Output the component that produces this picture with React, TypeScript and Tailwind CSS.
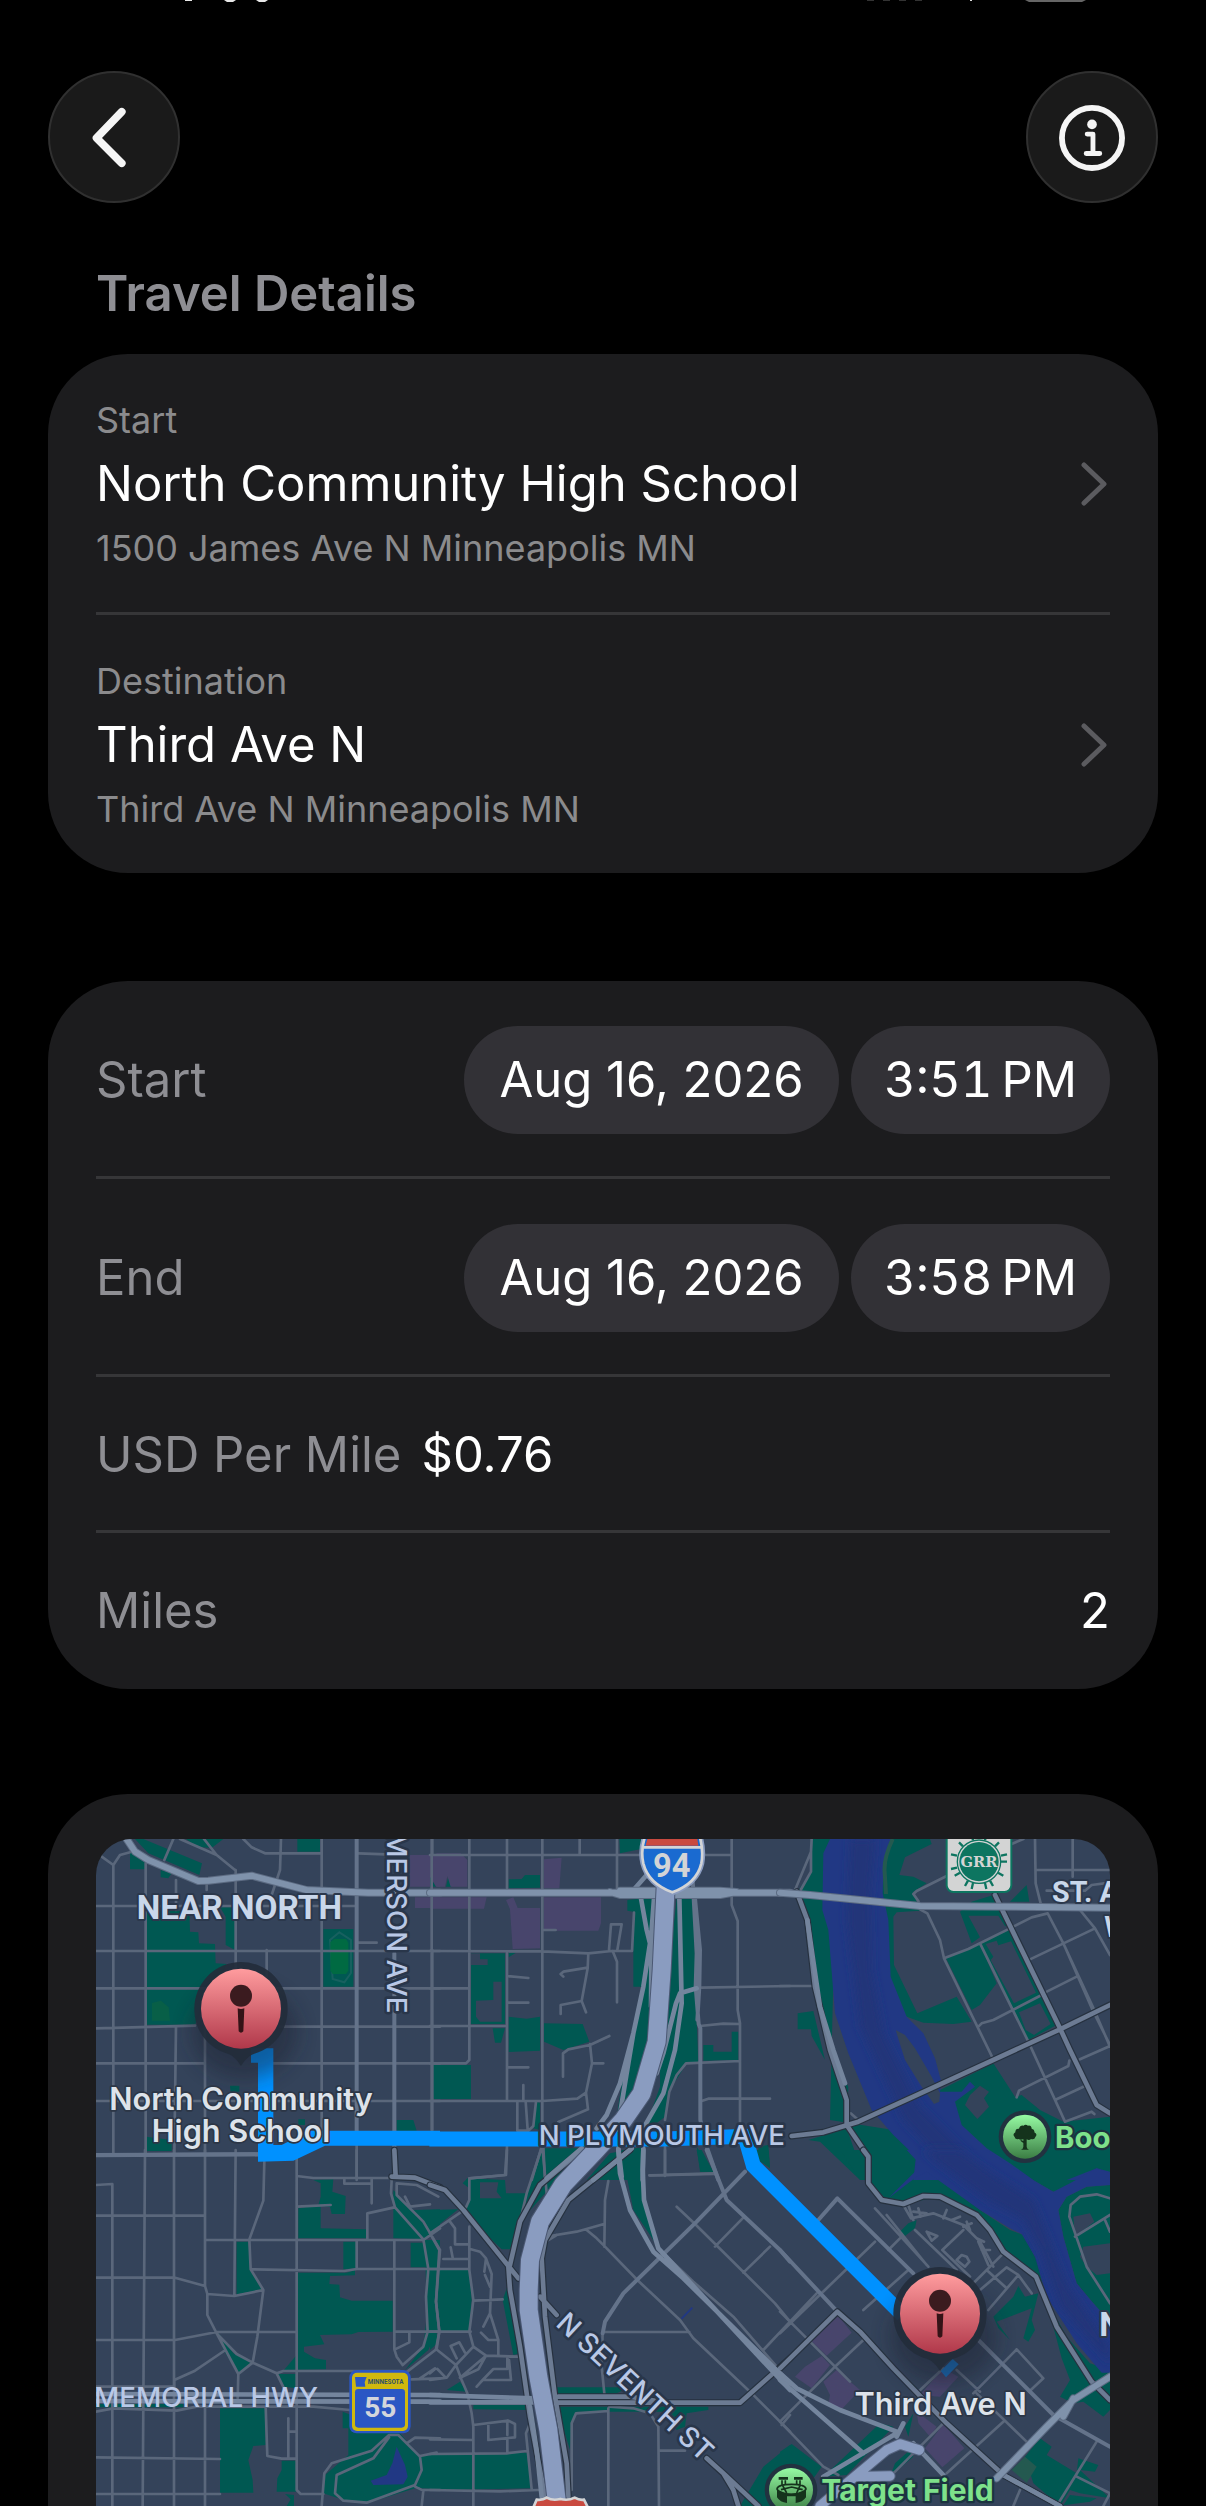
import type { ReactNode } from 'react';

type Tile = {
  x: number;
  y: number;
  parks: string;
  blocks?: string;
  retail?: string;
  water?: string;
  deepWater?: string;
  minor: string;
  mid: string;
  cased: string;
  ramps: string;
  main: string;
  highway: string;
};

// each tile keeps its own coordinates, x/y place it on the map
const tiles: Tile[] = [
  {
    x: -48,
    y: -57,
    parks:
      'M165 57 190 57 366 130 358 165 205 100ZM150 95 197 122 197 148 150 148ZM242 150 275 160 265 175 242 172ZM318 57 430 57 395 84 350 80ZM652 57 720 57 720 95 652 95ZM198 272 328 272 330 335 355 337 357 370 405 372 407 430 440 432 345 614 198 614ZM420 262 465 262 465 390 437 375 437 290ZM730 327 820 327 820 500 730 500ZM1060 735 1080 735 1080 835 1060 835ZM950 900 1000 900 1010 932 950 932ZM198 950 275 960 275 993 198 993ZM450 797 478 797 478 815 452 815ZM655 898 675 898 675 915 655 915Z',
    retail: 'M990 105 1080 105 1080 200 990 200ZM1005 232 1080 232 1080 264 1005 264Z',
    minor:
      'M100 135V1000M197 130V1000M288 180V270M288 620 283 1000M375 615V1000M380 183V210M467 150V460M560 390V470M725 57V930M830 940V1080M1057 57V105M1057 390V930M48 258H830M48 393H1080M835 368H890M48 505H1080M48 625 345 617M600 620H1080M48 730H375M580 730H1080M48 843H1080M555 100H720M835 100 920 103M300 57 410 105 465 150M372 57 410 105M490 57 515 82 555 100M280 57 253 120M65 110 100 135 120 105 150 97M603 57 600 150 575 225',
    mid: 'M830 57V940M943 400V1000M48 1006 545 1003',
    cased: '',
    ramps: '',
    main: 'M140 57 165 95 205 120 355 183 385 182 515 167 680 210 865 218 1080 218',
    highway: '',
  },
  {
    x: 1002,
    y: -57,
    parks:
      'M568 57 635 57 630 88 570 100ZM236 178 275 177 285 165 330 165 330 203 236 205ZM0 170 15 172 20 200 0 200ZM48 200 55 170 65 200ZM123 400 225 400 225 612 123 612ZM236 398 258 398 236 412ZM236 590 290 596 330 590 330 692 236 696ZM342 610 458 612 478 665 400 690 342 665ZM188 625 225 625 213 668 195 668ZM10 735 123 735 123 837 10 837ZM592 240 680 230 660 600 660 780 560 890 580 760 640 500 610 500 610 275 592 272ZM740 235 790 235 800 600 805 725 770 730 745 770 715 815 705 890 640 940 690 800 690 700ZM820 675 850 675 850 695 905 695 905 635 925 635 925 720 820 722ZM318 845 330 848 330 930 310 925ZM335 985 460 985 370 1060 305 1080ZM540 1000 640 980 640 1080 470 1080ZM800 980 850 1055 810 1055ZM985 980 1015 975 1020 1040 985 1020Z',
    blocks: 'M190 485 215 485 215 605 150 605 138 590 138 542 190 540ZM123 435 173 435 173 418 150 418 150 400 123 400Z',
    retail:
      'M0 120 20 100 92 100 112 120 112 200 62 200 52 168 45 200 18 200 0 170ZM0 232 170 232 162 266 0 266ZM342 118 395 113 388 205 342 205ZM342 232 513 232 513 310 505 332 342 332ZM228 240 250 232 263 264 330 264 330 385 248 387 240 268Z',
    minor:
      'M5 57V930M118 57V720L108 730H0M231 57V205M231 398V840M337 57V930M449 57V103M561 57V210M905 57V255L923 303V570L930 610V930M0 105H905M0 393 337 394 475 400 545 393H606L612 278M0 505H118M0 618H228M0 843H337L442 836 468 818 486 730 480 672M538 648 480 675 415 688 399 700V770M486 730H520M468 818 474 868 385 906M337 330H377M231 468 295 474M231 548H295M231 742H295M537 390 543 313H575L562 390M548 393 561 425V547M475 400 473 445 455 543 468 577M473 443 400 455 392 462 400 470M455 543 392 555V582M280 795V843M287 845 293 930M318 845 310 918 295 932 262 932V845M810 618 880 611 930 612M815 503 1080 498M705 920V1068M705 900 718 815 740 765 768 730 930 723M815 843 835 836H1020M231 980 225 1065 118 1075M335 980 305 1080M340 980 345 1080M658 1066 850 1060',
    mid: 'M788 180 800 400 797 500 806 612 811 625V900L830 980 865 1080M795 235 810 390 808 500 802 600',
    cased: '',
    ramps:
      'M633 235 650 330 660 370 640 500 610 640 570 790 530 885 500 925M672 235 665 330 663 560M610 640 590 760 572 870M748 230 755 550 735 690 700 820 640 925M800 505 750 520 738 550 700 700 680 760M650 165 615 205M455 985 350 1075M605 985 490 1080M565 985 575 1070M640 985 638 1080',
    main: 'M0 218H1080M540 216 570 225 870 225 920 216 870 212H570',
    highway: '',
  },
  {
    x: 2052,
    y: -57,
    parks:
      'M97 57 170 57 150 900 340 930 410 1000 410 1080 270 1080 265 1010 200 920 205 800 150 700 110 560 90 300 50 220 95 150ZM300 57 450 57 455 72 375 112 358 165 400 170 440 190 400 215 410 245 420 272 350 277 340 290 342 435 412 580 530 530 575 605 520 612 430 608 380 590 300 500ZM498 415 600 372 650 490 600 555 575 570ZM540 275 575 370 600 352 565 287 655 287 675 318 690 320 650 255 640 225 575 245ZM600 370 695 325 830 615 745 660ZM690 245 740 195 748 245ZM53 580 100 573 135 720 95 648 93 628 53 628ZM640 730 705 830 725 825 780 870 850 905 990 890 990 1080 740 1080 500 975 440 830ZM85 960 120 965 240 1080 290 1080 230 1010 200 925Z',
    blocks:
      'M617 372 650 362 655 376 693 364 768 518 702 550 632 420 640 410ZM717 577 780 550 812 612 762 645 737 630ZM600 797 627 815 612 835 627 860 592 897 555 855 570 825Z',
    water:
      'M150 57 335 57 310 150 308 220 325 300 332 470 380 590 430 640 465 715 485 790 480 815 545 815 570 785 585 800 545 830 525 845 545 915 620 985 690 1030 760 1080 400 1080 408 1010 340 945 275 870 205 700 165 580 145 330 127 270 130 100ZM860 1080 950 1045 990 1055 990 1080Z',
    deepWater: 'M210 57 285 57 270 250 275 450 310 640 420 860 560 1000 680 1080 540 1080 370 900 240 620 200 300Z',
    minor:
      'M95 57 93 95 45 210M93 95V155L62 210M0 498H100M500 168 410 213 400 222 415 243 420 268 442 280 480 360 492 415 640 718M492 415 565 387 690 325 755 292 803 280M600 370 745 665 855 905M803 280 850 370 945 575 990 680M850 370 940 575 990 675M750 418 945 325M790 520 890 470M900 270 945 325 990 405M595 620 605 610 640 600 785 525M710 832 717 812 865 738 868 722M825 840 915 798M855 905 935 875 943 882M900 718 990 678M765 57 767 190 782 250M878 57V170M767 150H990M800 212H915L935 195 990 188M695 72 730 57M212 880 235 900',
    mid: '',
    cased:
      'M50 215 82 300 105 500 150 690 200 840V915L265 1010V1080M35 948 130 937 235 905 400 830 840 628 990 555M645 225 840 625 870 690 950 855 990 880',
    ramps: 'M82 300 120 560 160 690 195 790',
    main: 'M0 218 90 225 420 258 990 263',
    highway: '',
  },
  {
    x: -48,
    y: 933,
    parks:
      'M700 90 760 88 757 125 797 138 795 192 755 192 750 170 722 168 722 235 858 238 858 265 655 265 655 175 715 165 722 140 722 100ZM470 275 505 275 512 355 548 418 470 433ZM415 548 460 610 515 638 475 672 430 600ZM652 368 800 368 825 360 825 376 750 378 748 402 778 404 780 442 815 452 938 452 938 545 835 546 815 553 720 555 733 583 672 590 672 605 705 625 738 630 738 658 612 660 650 615ZM595 672 650 672 650 715 612 710ZM790 275 830 275 830 355 790 358ZM992 278 1035 278 1040 352 992 352ZM940 120 1000 180 1080 178 1080 240 1030 268 940 265ZM1035 270 1080 270 1070 545 1045 600 975 660 1030 590 1040 500ZM48 762H310V772H48ZM420 775 555 775 557 885 520 888 505 930 518 990 520 1028 420 1028ZM605 932 648 932 648 1025 590 1025 592 985 605 960ZM615 1032 642 1035 642 1068 620 1068 632 1048ZM788 785 960 850 1020 920 1020 1010 860 1060 790 1050 730 1030 735 975 805 915 805 835 788 835ZM1020 920 1080 910 1080 1018 1020 1015Z',
    water: 'M950 890 975 945 983 980 970 1003 880 1005 872 992 920 975 937 940Z',
    minor:
      'M48 105 97 102V1068M195 0 188 1068M282 0V1068M375 0V408L382 432V495L410 550 475 672 473 745M375 765V1068M467 0 463 438M553 35 550 152 508 268 512 358 550 420 532 560 518 638M650 0V1020L662 1032H730M830 0V83M830 272V355M943 272V598L950 620 968 645M48 197H375M48 383H285L375 408M48 570H285L410 546H650M377 270H1030M515 358 793 363 830 357H1080M382 432 463 438 550 420M410 550 470 612 518 638 590 670 612 715M518 638 475 672M432 603 345 662 283 690V715M590 670 610 663H960M650 78 700 84H940M650 170 752 165M793 84V101H875M875 84V160M862 268V190L943 172M943 545H1080M988 545V577L945 598M48 710H280M48 785 100 775 290 782 350 770H700L810 780M48 922 420 927M48 1032H420M557 770 562 918 605 926H648M625 805V925M625 845H648M927 862 880 925 770 975 765 1030 790 1052 860 1058 1005 1005 1025 960 1020 920 980 880 955 855H927L875 902 755 940 733 970 725 1068M980 880 1005 863 1080 865M1020 918 1070 908M1005 1010 1030 1022 1025 1068M1030 1020H1080M935 90 933 130 945 172 1030 268 1045 357 1038 440 1043 545 1030 590 968 645M950 100V135L1030 215 1080 300M1030 270 1080 235M950 100 1010 105 1075 140M990 170 1050 163M975 140 990 170M995 688 1080 685M1020 685 1065 655M1080 300 1068 455 1078 545 1070 597 975 670',
    mid: 'M48 15 535 13',
    cased: 'M943 0 947 80M935 80 1005 83 1080 112',
    ramps: 'M48 732 1080 735M48 753 1080 755',
    main: '',
    highway: '',
  },
  {
    x: 1002,
    y: 933,
    parks:
      'M0 180 85 178 0 245ZM0 360 120 360 125 450 118 545 20 545 22 580 0 600ZM98 100 112 85 225 90 228 130 290 130 335 0 460 0 270 215 240 298 215 298 90 180 118 160 118 115ZM235 400 270 610 250 615 218 450ZM380 712 600 712 560 730 385 735ZM380 770 835 770 835 780 770 790 765 830 740 840 700 785 440 785 425 815 420 900ZM0 912 290 908 305 1015 0 1020ZM50 720 90 695 110 725ZM130 765 300 765 298 780 130 778ZM575 0 640 0 640 150 690 300 610 180ZM800 0 815 0 850 65 812 65ZM970 0 1015 0 1020 55 985 30ZM1080 885 1080 1068 930 1068 1000 950Z',
    blocks: 'M150 97 205 97 200 125 215 145 150 145Z',
    minor:
      'M231 0 228 75 118 85V150L105 178M333 0 290 130 270 215M338 0 350 130M660 76 853 72M705 0V75M0 357H118M0 545H122M60 215 75 235V283H118M0 250 105 178M0 250 28 300 18 455 28 545 18 597 78 645 95 690 112 730 125 790 130 830V1068M118 230V360L130 450 118 545 130 590 168 617 270 620M120 297 150 305 168 325 185 372 180 490 160 530M165 375 180 410M168 325 163 365M130 452 218 448M180 490 205 570V615M205 570H175L153 548M40 327H118M68 323 62 292M130 590 78 645M62 588 88 577 105 608M62 588 80 625M168 617 145 658 90 683M168 617 90 683M140 710 158 690H243L237 630M232 625V657H190L158 690M0 690 50 683 78 645M22 657 47 683M0 670 15 657M535 93 525 150 523 290M522 222 440 245 360 258M470 240 500 265 525 290 622 390 750 510 790 565 960 725 1080 845M740 170 795 222 1035 460 1080 515 1000 600M855 290 940 203M940 368 1020 290M525 546H778M518 546 515 650 525 750 540 770 610 775 660 790 685 830 687 1068M535 775V1068M425 1020V820L438 790 535 783M687 902H765M130 825 235 812 255 822V862L175 870V825M232 812V855M232 870V905M0 868 130 870M0 912 230 910 290 903M300 820 288 850 305 1018M0 1020 210 1024 325 1020M1055 825 1080 795M700 310 790 395 910 500 1040 650M355 270 380 255',
    water: 'M752 505 785 471 789 475 757 508Z',
    mid: 'M830 0 890 150 1050 300 1080 335M945 65 800 215 580 430 525 515 518 550M830 925 865 955',
    cased:
      'M0 105 45 120 100 180 265 385M240 345 270 215 330 105 455 0M235 350 240 420 270 590 300 800 345 1040M600 0 415 150 345 270 335 325 345 500 375 740 410 940 415 1040M330 440 380 495M385 740H600L690 755M385 758H930L1080 625M830 925 880 970 985 1068M880 970 910 1020 925 1068',
    ramps:
      'M565 0 570 70 600 180 670 305 760 385 1080 700M640 0 638 60 642 150 685 295 1080 720M0 735 310 745M0 757H310M300 770 320 900 335 1040',
    main: '',
    highway: '',
  },
  {
    x: 2052,
    y: 933,
    parks:
      'M180 0 400 0 450 60 600 180 690 240 730 255 770 330 800 450 860 560 930 640 990 660 990 780 970 800 910 755 880 760 840 740 870 690 845 625 820 530 785 420 765 380 680 310 620 220 480 140 380 160 320 150 265 90 240 88ZM600 0H990V80L820 125ZM990 105 920 110 860 140 835 180 850 260 890 400 940 460 990 515ZM640 500 700 440 715 408 735 440 775 430 755 510 765 540 745 575 730 565 755 475 650 515 690 570 655 535ZM385 220 410 210 405 235 370 262 355 250ZM0 905 35 882 125 950 90 1000 0 1000ZM130 980 300 820 340 830 200 975ZM375 830 400 790 385 860ZM345 940 390 900 400 920 330 980ZM780 865 815 890 800 915 890 970 895 925 955 945 945 965 900 960 990 1045 900 1030 870 1020 840 1068 760 1000 735 920ZM870 1035 950 1045 930 1055 850 1066Z',
    blocks: 'M880 200 930 190 943 215 885 260ZM910 290 990 280 990 370 950 375 920 350 900 320Z',
    retail:
      'M175 497 215 548 140 617 93 572ZM45 680 75 650 125 618 150 645 95 715ZM130 695 170 660 240 720 185 778 145 765 150 735ZM490 655 535 680 480 740 420 735ZM410 785 470 830 450 860 415 820ZM490 822 553 895 487 952 435 895Z',
    water:
      'M380 0 620 0 700 55 820 125 870 100 950 55 990 70 990 105 920 110 860 140 835 180 850 260 890 400 940 460 990 515 990 668 965 668 890 580 800 440 765 320 725 252 690 235 600 180 440 65 410 80 325 145 370 100 405 65 408 30Z',
    deepWater: 'M540 0 620 60 760 150 800 250 860 400 990 590 990 640 840 470 780 300 730 210 620 150 460 30 430 0Z',
    minor:
      'M285 275 0 550M385 360 250 480M285 175 445 350M320 195 440 345M365 260 325 300M405 240 530 360M370 165 393 205 460 190 550 225 600 275 640 350M385 165 400 210M550 240 487 300M487 300 570 380M0 485 210 695M110 430 30 515M165 650 250 570M165 650 0 815 130 950 175 975M670 310 575 405M620 360 680 415M600 420 680 352 715 375 625 480M715 375 755 430M710 598 580 730M710 598 790 685 750 722M530 660 600 725M590 730 745 880M410 730 490 655M670 815 500 970M720 1020 700 1068M950 875 830 1068M890 980 990 1030 970 1068M990 145 950 133 900 140 872 165 868 200 920 350 990 460M885 260 990 195M975 210 990 245M440 245 472 258 455 272ZM530 330 545 315 560 320 568 335 555 350ZM400 185 440 190M415 175 422 200M490 205 500 180M515 210 540 200M550 230 575 220M560 215 570 240M590 265 612 275M605 300 630 300M595 275 625 345M495 815 340 970',
    mid: 'M115 210 172 145 400 370M0 300 172 485M595 570 665 640 820 795 990 890',
    cased:
      'M250 0 265 20V100L305 150 370 162 430 138 480 140 590 195 630 240 670 305 768 380 830 530 935 695 990 750M0 655 172 485 240 545 340 655 500 820 670 975 840 1068',
    ramps:
      'M0 670 50 715 180 780 350 845M0 690 250 910M490 975 400 880M350 860 370 820M130 980 350 850M670 975 840 1068',
    main: 'M990 680 880 750 800 830 650 985M880 745 850 800',
    highway: 'M418 900 360 882 320 900 200 1000 120 1068M330 978 230 980',
  },
];

const freeway = 'M1709 143 1697 393 1682 608 1637 763 1582 843 1500 933 1402 1036 1332 1148 1302 1263 1298 1353 1298 1413 1327 1613 1357 1773 1384 2001';

function Layer({ children }: { children: (tile: Tile) => ReactNode }) {
  return (
    <>
      {tiles.map((tile) => (
        <g key={`${tile.x}:${tile.y}`} transform={`translate(${tile.x} ${tile.y})`}>
          {children(tile)}
        </g>
      ))}
    </>
  );
}

function Pin({ x, y }: { x: number; y: number }) {
  return (
    <g transform={`translate(${x} ${y})`}>
      <ellipse cx="10" cy="70" rx="160" ry="140" fill="#1a2230" opacity="0.45" filter="url(#soft)" />
      <path d="M-140 0A140 140 0 1 1 140 0C140 70 95 120 40 135 20 142 8 160 0 172-8 160-20 142-40 135-95 120-140 70-140 0Z" fill="#232d3b" opacity="0.92" />
      <circle r="120" fill="url(#pin)" />
      <circle cy="-39" r="33" fill="#3b1b1f" />
      <path d="M-10-1Q0 3 10-1L7 68Q0 76-7 68Z" fill="#341317" />
    </g>
  );
}

function RouteMap() {
  return (
    <svg
      viewBox="0 0 3042 2001"
      className="block h-auto w-full rounded-t-[36px] bg-[#34435a] font-['Inter',sans-serif]"
      role="img"
      aria-label="Map of the route"
      fill="none"
    >
      <defs>
        <linearGradient id="pin" x1="0" y1="0" x2="0" y2="1">
          <stop offset="0" stopColor="#ff9c9e" />
          <stop offset="1" stopColor="#b0384a" />
        </linearGradient>
        <linearGradient id="poi" x1="0" y1="0" x2="0" y2="1">
          <stop offset="0" stopColor="#96fba3" />
          <stop offset="1" stopColor="#3b7d44" />
        </linearGradient>
        <filter id="soft" x="-30%" y="-30%" width="160%" height="160%">
          <feGaussianBlur stdDeviation="28" />
        </filter>
        <filter id="depth">
          <feGaussianBlur stdDeviation="12" />
        </filter>
      </defs>

      <Layer>
        {(t) => (
          <>
            <path d={t.parks} fill="#005852" />
            <path d={t.blocks} fill="#34435a" />
            <path d={t.retail} fill="#48456c" />
          </>
        )}
      </Layer>
      <Layer>
        {(t) => (
          <>
            <path d={t.water} fill="#213884" />
            <path d={t.deepWater} fill="#203579" filter="url(#depth)" />
          </>
        )}
      </Layer>
      <path d="M2399 573 2427 588 2457 628 2507 713 2532 763 2530 788 2514 795 2477 743 2427 663Z" fill="#34435a" />
      <path d="M702 303 730 280 765 303V402L745 430 710 420Z" stroke="#17605f" strokeWidth="6" />
      <path d="M703 310 715 300H750L757 312V395L750 405H710L703 395Z" fill="#006a42" />
      <path d="M168 492 195 485 218 505 222 545H168Z" fill="#085f47" />
      <path d="M2747 1893 2787 1853 2822 1883 2792 1931Z" fill="#245950" />
      <path d="M2390 0Q2362 60 2366 100L2370 165" stroke="#24594f" strokeWidth="12" />

      <g strokeLinecap="round" strokeLinejoin="round">
        <Layer>{(t) => <path d={t.minor} stroke="#5a677b" strokeWidth="8" />}</Layer>
        <Layer>{(t) => <path d={t.mid} stroke="#64738a" strokeWidth="12" />}</Layer>
        <Layer>
          {(t) => (
            <>
              <path d={t.cased} stroke="#26313f" strokeWidth="21" />
              <path d={t.cased} stroke="#6c7b93" strokeWidth="14" />
            </>
          )}
        </Layer>
        <Layer>{(t) => <path d={t.ramps} stroke="#74859d" strokeWidth="14" />}</Layer>
        <Layer>
          {(t) => (
            <>
              <path d={t.main} stroke="#5c6b82" strokeWidth="24" />
              <path d={t.main} stroke="#7f92ab" strokeWidth="18" />
            </>
          )}
        </Layer>
        <path d={freeway} stroke="#4b5873" strokeWidth="60" />
        <path d={freeway} stroke="#8a9cc0" strokeWidth="54" />
        <Layer>
          {(t) => (
            <>
              <path d={t.highway} stroke="#56647f" strokeWidth="34" />
              <path d={t.highway} stroke="#8a9cc0" strokeWidth="28" />
            </>
          )}
        </Layer>
      </g>

      {/* route */}
      <path d="M465 628H532V918H557L642 875H1032V920H687L592 965 486 968V671H465Z" fill="#0091ff" />
      <path d="M1000 900 1700 900 1947 892 1972 980 2420 1428" stroke="#0091ff" strokeWidth="45" />
      <path d="M2534 1596 2570 1560 2588 1576 2550 1615Z" fill="#1673c4" />

      <Pin x={435} y={509} />
      <Pin x={2532} y={1424} />

      {/* road and area names */}
      <g strokeLinejoin="round" paintOrder="stroke" stroke="#29364a" strokeWidth="16" fill="#b9c8e6" fontSize="83" fontWeight="500">
        <text transform="translate(874 523) rotate(90)" textAnchor="end">EMERSON AVE</text>
        <text x="1328" y="918">N PLYMOUTH AVE</text>
        <text x="-6" y="1705" stroke="none">MEMORIAL HWY</text>
        <text transform="translate(1376 1458) rotate(43)">N SEVENTH ST</text>
      </g>
      <g className="font-['Roboto',sans-serif]" strokeLinejoin="round" paintOrder="stroke" stroke="#2b384c" strokeWidth="12" fill="#c9d7ea" fontWeight="700">
        <text x="122" y="239" fontSize="100">NEAR NORTH</text>
        <text x="2868" y="190" fontSize="86">ST. A</text>
        <text x="3025" y="294" fontSize="86">W</text>
        <text x="3010" y="1490" fontSize="98">N</text>
      </g>
      <g strokeLinejoin="round" paintOrder="stroke" stroke="#2c3646" strokeWidth="10" fill="#dde3ea" fontSize="92" fontWeight="600" textAnchor="middle">
        <text x="435" y="813">North Community</text>
        <text x="435" y="910">High School</text>
        <text x="2534" y="1728">Third Ave N</text>
      </g>

      {/* interstate 94 */}
      <path d="M1652-20Q1632 28 1642 73 1657 133 1729 160 1802 133 1816 73 1824 28 1807-20Z" fill="#1a6ad0" stroke="#8a9cc0" strokeWidth="18" />
      <path d="M1652-20Q1632 28 1642 73 1657 133 1729 160 1802 133 1816 73 1824 28 1807-20Z" fill="#1a6ad0" stroke="#d3d4d6" strokeWidth="8" />
      <path d="M1654 0H1804L1807 20H1649Z" fill="#c94a40" />
      <path d="M1643 25H1815" stroke="#d3d4d6" strokeWidth="8" />
      <text x="1727" y="113" textAnchor="middle" fontSize="98" fontWeight="700" fill="#d3d4d6" className="font-['Roboto',sans-serif]">94</text>
      <path d="M1310 2010 1322 1982Q1340 1984 1352 1976 1370 1986 1393 1980 1416 1986 1436 1976 1450 1984 1464 1982L1478 2010Z" fill="#c94a40" stroke="#d3d4d6" strokeWidth="8" />

      {/* Great River Road */}
      <rect x="2552" y="-30" width="194" height="189" rx="20" fill="#d3d4d4" stroke="#0d7560" strokeWidth="6" />
      <g transform="translate(2649 68)">
        <path
          d="M66 0 84 0M57 33 73 42M33 57 42 73M-18 64-22 82M18 64 22 82M-33 57-42 73M-57 33-73 42M-66 18-84 22M-66-18-84-22M-48-46-60-58M-18-64-20-72M18-64 20-72M48-46 60-58M66-18 84-22"
          stroke="#0d7560"
          strokeWidth="7"
        />
        <circle r="65" fill="#d3d4d4" stroke="#0d7560" strokeWidth="4" />
        <circle r="59" fill="#0d7560" />
        <text y="17" textAnchor="middle" fontSize="44" fontWeight="700" fill="#d3d4d4" className="font-['DejaVu_Serif',serif]">GRR</text>
      </g>

      {/* Minnesota 55 */}
      <rect x="760" y="1593" width="184" height="190" rx="22" fill="#2b57c4" />
      <rect x="768" y="1601" width="168" height="175" rx="15" fill="#d0b80e" />
      <rect x="777" y="1650" width="150" height="116" rx="10" fill="#2b57c4" />
      <path d="M777 1614H812L806 1630 808 1643H780Z" fill="#2b57c4" />
      <text x="815" y="1636" fontSize="19" fontWeight="700" fill="#2f5068" className="font-['Roboto',sans-serif]">MINNESOTA</text>
      <text x="853" y="1734" textAnchor="middle" fontSize="84" fontWeight="700" fill="#d3d6dc" className="font-['Roboto',sans-serif]">55</text>

      {/* park */}
      <circle cx="2787" cy="893" r="79" fill="#223240" />
      <circle cx="2787" cy="893" r="66" fill="url(#poi)" />
      <path
        d="M2775 932Q2781 930 2782 924V912L2773 905 2775 903 2782 906V900Q2774 905 2768 900 2756 902 2756 894 2748 886 2758 880 2758 868 2769 869 2772 858 2783 860 2788 854 2796 860 2806 858 2807 869 2817 871 2815 880 2826 886 2818 894 2816 903 2805 900 2800 905 2792 901V924Q2793 930 2799 932Z"
        fill="#15331c"
      />
      <text x="2877" y="928" fontSize="88" fontWeight="700" fill="#7ee18b" stroke="#1c3340" strokeWidth="14" paintOrder="stroke" strokeLinejoin="round">Boo</text>

      {/* stadium */}
      <circle cx="2085" cy="1953" r="79" fill="#223240" />
      <circle cx="2085" cy="1953" r="66" fill="url(#poi)" />
      <path d="M2048 1914H2076V1922H2048ZM2094 1914H2120V1922H2094ZM2043 1950Q2085 1978 2130 1950V1975Q2120 1990 2099 1992V1972H2073V1992Q2052 1990 2043 1975Z" fill="#15331c" />
      <path d="M2058 1924V1938M2068 1924V1936M2102 1924V1936M2112 1924V1938M2043 1950Q2045 1936 2087 1936 2128 1936 2130 1950 2126 1966 2087 1966 2047 1966 2043 1950ZM2060 1940 2072 1962M2112 1940 2102 1962M2055 1952 2087 1944 2120 1952" stroke="#15331c" strokeWidth="5" />
      <text x="2176" y="1987" fontSize="90" fontWeight="700" fill="#7ee18b" stroke="#1c3340" strokeWidth="14" paintOrder="stroke" strokeLinejoin="round">Target Field</text>
    </svg>
  );
}

function PlaceRow({ label, name, address }: { label: string; name: string; address: string }) {
  return (
    <button className="flex w-full items-center justify-between pt-[42px] pb-10 text-left">
      <span className="flex flex-col gap-2">
        <span className="text-[36px] leading-[48px] text-[#8b8b8d]">{label}</span>
        <span className="text-[49px] leading-[64px] text-white">{name}</span>
        <span className="text-[36px] leading-[48px] text-[#8b8b8d]">{address}</span>
      </span>
      <svg viewBox="0 0 28 44" className="mr-[2px] h-11 w-7" fill="none" aria-hidden="true">
        <path d="M4 3 24 22 4 41" stroke="#5b5b5f" strokeWidth="5" strokeLinecap="round" strokeLinejoin="round" />
      </svg>
    </button>
  );
}

function TimeRow({ label, date, time }: { label: string; date: string; time: string }) {
  return (
    <div className="flex items-center justify-between pt-[45px] pb-[42px]">
      <span className="text-[#8e8e93]">{label}</span>
      <div className="flex gap-3">
        <button className="h-[108px] w-[375px] rounded-full bg-[#323136]">{date}</button>
        <button className="h-[108px] w-[259px] rounded-full bg-[#323136] tabular-nums">{time}</button>
      </div>
    </div>
  );
}

export default function App() {
  return (
    <main className="h-screen overflow-hidden bg-black px-12 font-['Inter',sans-serif] text-[49px] leading-[64px] text-white">
      <svg viewBox="0 0 1110 4" className="block h-1 w-full" aria-hidden="true">
        <path d="M137 0H144V1H137ZM176 0H188L185 2H179ZM208 0H220L217 2H211Z" fill="#e8e8e8" />
        <path d="M819 0H826V1H819ZM835 0H842V1H835ZM851 0H858V1H851ZM867 0H874V1H867Z" fill="#333" />
        <path d="M922 0H924V1H922Z" fill="#ddd" />
        <path d="M977 0H1038L1034 2H981Z" fill="#666" />
      </svg>

      <header className="flex justify-between pt-[67px]">
        <button aria-label="Back" className="flex size-[132px] items-center justify-center rounded-full border-2 border-[#303030] bg-[#1a1a1a]">
          <svg viewBox="0 0 132 132" className="size-32" fill="none">
            <path d="M74 40 48 67 74 93" stroke="#f5f5f5" strokeWidth="8" strokeLinecap="round" strokeLinejoin="round" />
          </svg>
        </button>
        <button aria-label="Info" className="flex size-[132px] items-center justify-center rounded-full border-2 border-[#303030] bg-[#1a1a1a]">
          <svg viewBox="0 0 132 132" className="size-32" fill="none">
            <circle cx="66" cy="67" r="31" stroke="#f5f5f5" strokeWidth="6" />
            <circle cx="66" cy="53" r="5" fill="#f5f5f5" />
            <path d="M61 63H67V83M60 83H74" stroke="#f5f5f5" strokeWidth="5" strokeLinecap="round" strokeLinejoin="round" />
          </svg>
        </button>
      </header>

      <h1 className="mt-[59px] px-12 font-semibold text-[#8e8e93]">Travel Details</h1>

      <section className="mt-7 divide-y-3 divide-[#363638] rounded-[80px] bg-[#1c1c1e] px-12">
        <PlaceRow label="Start" name="North Community High School" address="1500 James Ave N Minneapolis MN" />
        <PlaceRow label="Destination" name="Third Ave N" address="Third Ave N Minneapolis MN" />
      </section>

      <section className="mt-[108px] divide-y-3 divide-[#363638] rounded-[80px] bg-[#1c1c1e] px-12">
        <TimeRow label="Start" date="Aug 16, 2026" time={'3:51\u2009PM'} />
        <TimeRow label="End" date="Aug 16, 2026" time={'3:58\u2009PM'} />
        <div className="flex gap-5 pt-[46px] pb-[43px]">
          <label htmlFor="rate" className="text-[#8e8e93]">USD Per Mile</label>
          <input id="rate" defaultValue="$0.76" className="h-16 min-w-0 flex-1 bg-transparent outline-none" />
        </div>
        <div className="flex justify-between pt-[46px] pb-[46px]">
          <label htmlFor="miles" className="text-[#8e8e93]">Miles</label>
          <input id="miles" defaultValue="2" className="h-16 min-w-0 flex-1 bg-transparent text-right outline-none" />
        </div>
      </section>

      <section className="mt-[105px] rounded-t-[80px] bg-[#1c1c1e] px-12 pt-[45px]">
        <RouteMap />
      </section>
    </main>
  );
}
